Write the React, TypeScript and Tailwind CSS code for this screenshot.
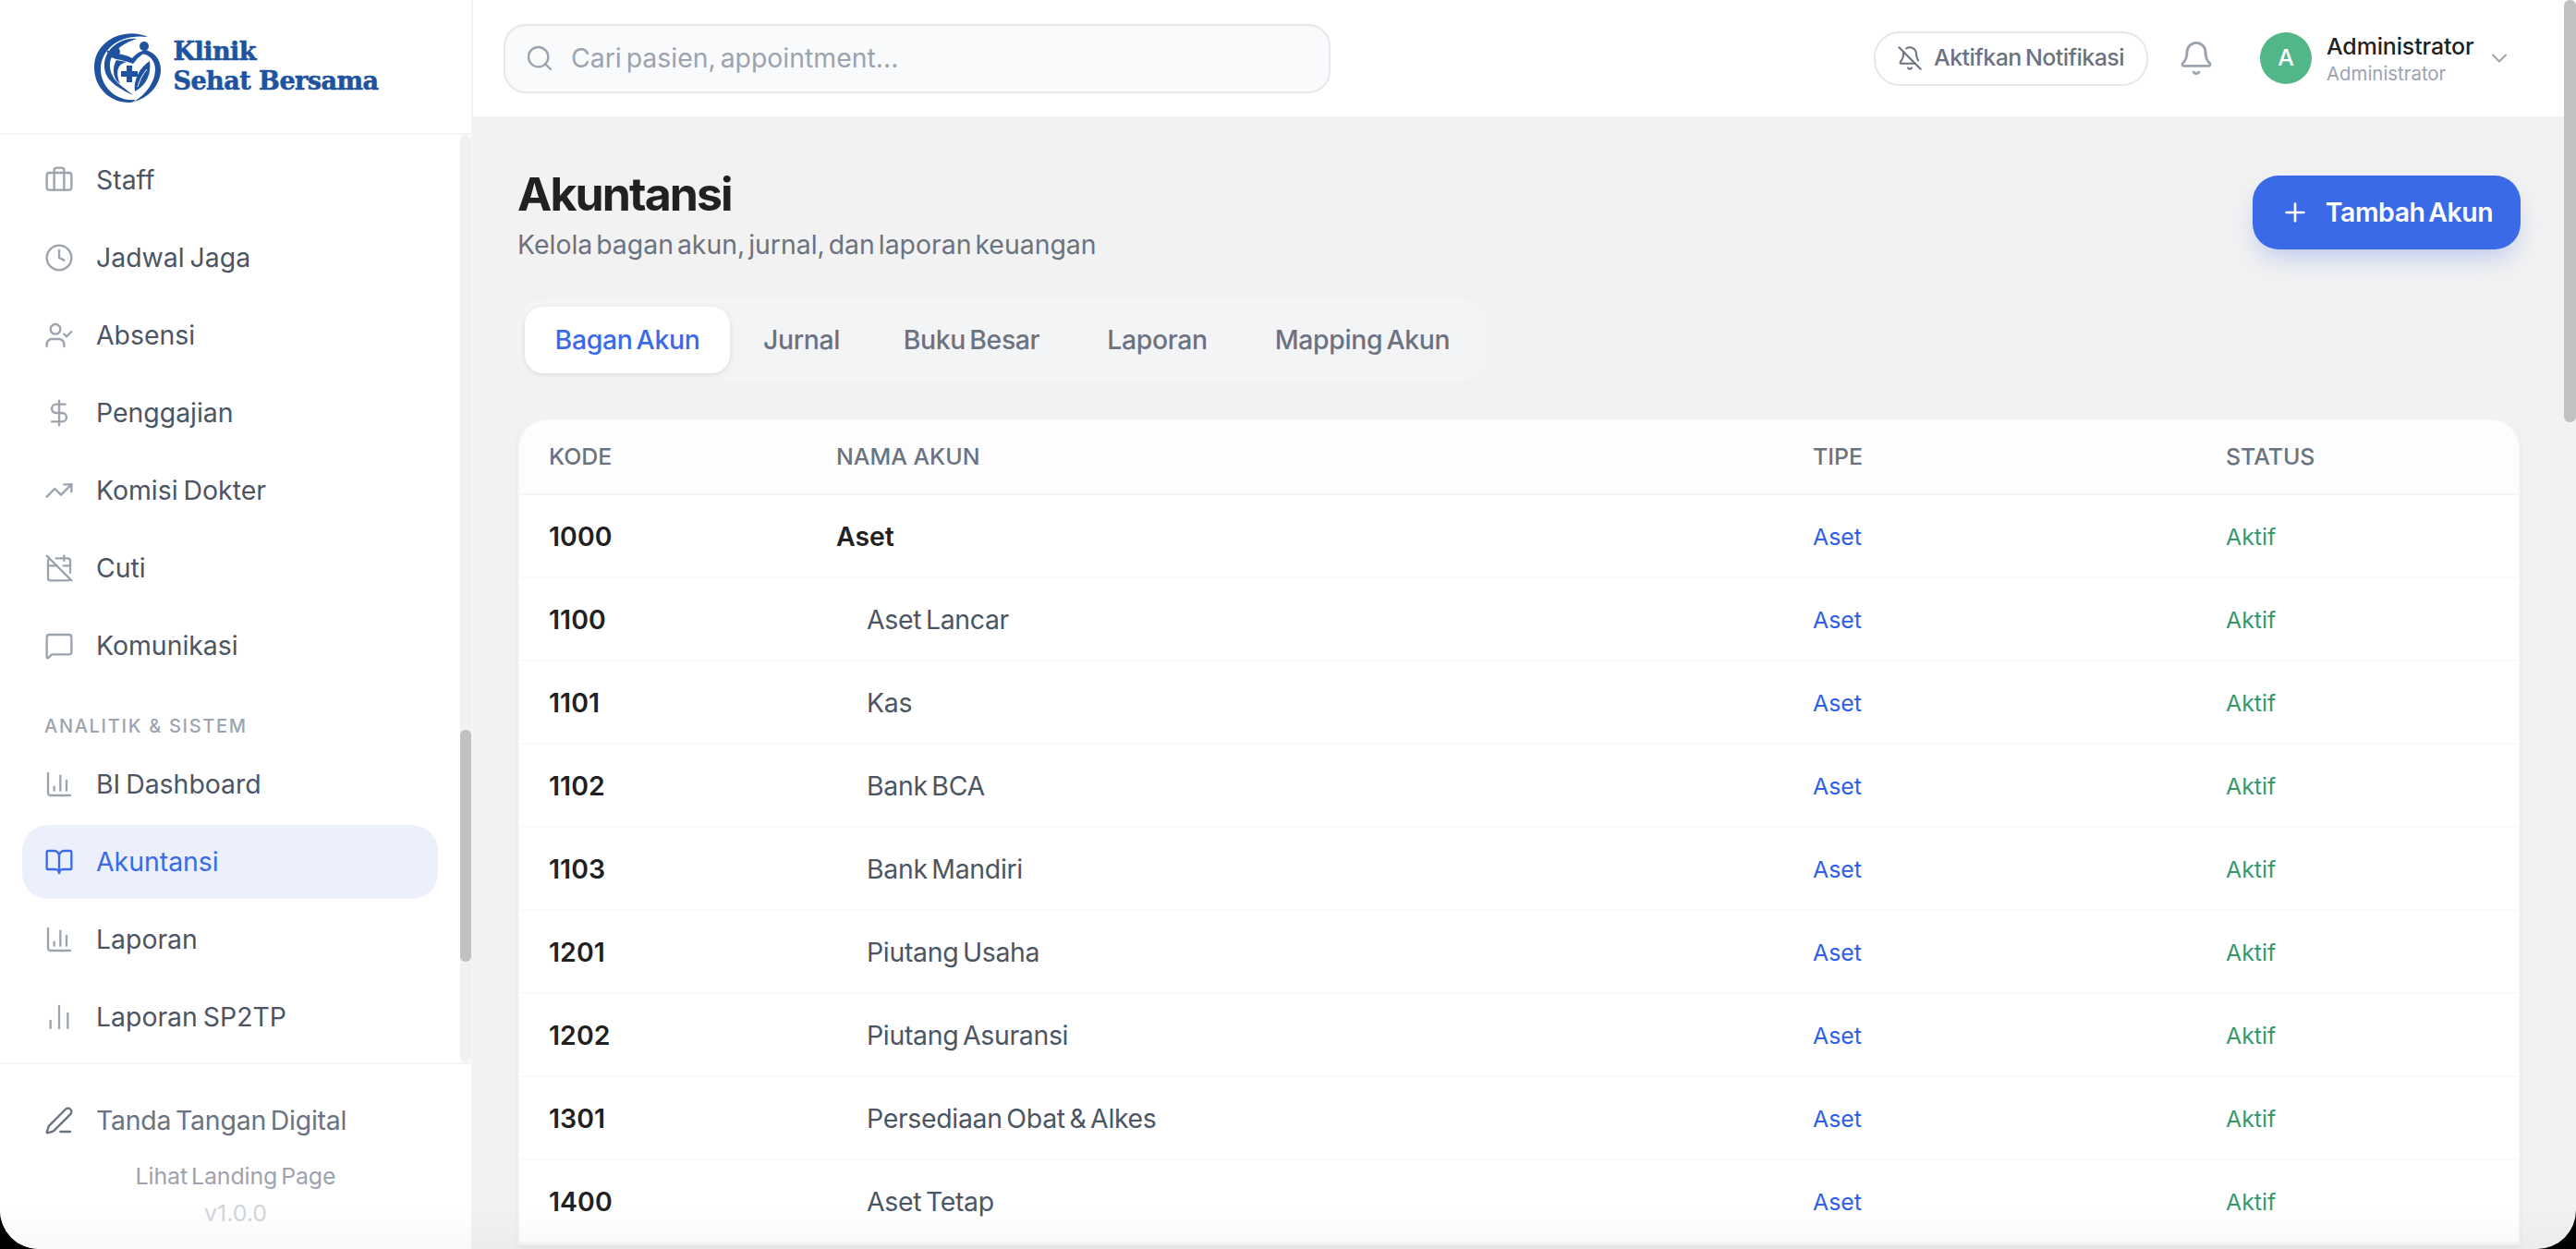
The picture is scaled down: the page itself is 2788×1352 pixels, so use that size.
import { BarChart2, BarChart3, Bell, BellOff, BookOpen, Briefcase, CalendarOff, ChevronDown, Clock, DollarSign, MessageSquare, PenLine, Plus, Search, TrendingUp, UserCheck } from "lucide-react";

const navA = [
  { label: "Staff", Icon: Briefcase },
  { label: "Jadwal Jaga", Icon: Clock },
  { label: "Absensi", Icon: UserCheck },
  { label: "Penggajian", Icon: DollarSign },
  { label: "Komisi Dokter", Icon: TrendingUp },
  { label: "Cuti", Icon: CalendarOff },
  { label: "Komunikasi", Icon: MessageSquare },
];
const navB = [
  { label: "BI Dashboard", Icon: BarChart3, active: false },
  { label: "Akuntansi", Icon: BookOpen, active: true },
  { label: "Laporan", Icon: BarChart3, active: false },
  { label: "Laporan SP2TP", Icon: BarChart2, active: false },
];
const rows = [
  ["1000", "Aset", 0],
  ["1100", "Aset Lancar", 1],
  ["1101", "Kas", 1],
  ["1102", "Bank BCA", 1],
  ["1103", "Bank Mandiri", 1],
  ["1201", "Piutang Usaha", 1],
  ["1202", "Piutang Asuransi", 1],
  ["1301", "Persediaan Obat & Alkes", 1],
  ["1400", "Aset Tetap", 1],
] as const;
const tabs = [
  { label: "Jurnal", cls: "flex h-[72px] w-[139px] items-center justify-center font-medium whitespace-nowrap" },
  { label: "Buku Besar", cls: "flex h-[72px] w-[213px] items-center justify-center font-medium whitespace-nowrap" },
  { label: "Laporan", cls: "flex h-[72px] w-[173px] items-center justify-center font-medium whitespace-nowrap" },
  { label: "Mapping Akun", cls: "flex h-[72px] w-[255px] items-center justify-center font-medium whitespace-nowrap" },
];

function Logo() {
  return (
    <svg viewBox="0 0 86 84" className="w-[86px] h-[84px] shrink-0" fill="#1f539f">
      <path d="M66 11C42 0 8 14 8 44c0 22 17 38 38 38 3 0 6-1 6-3-21 2-37-15-37-33C15 24 36 7 66 11z" />
      <path d="M62 25c10 1 18 10 18 21 0 17-13 31-29 35 13-8 23-21 23-35 0-9-6-16-15-17z" />
      <path d="M54 13C37 11 19 24 19 42c0 15 12 23 31 32-10-9-24-15-25-31-1-13 12-25 29-30z" />
      <circle cx="31" cy="27" r="5" />
      <circle cx="62" cy="21" r="5" />
      <path d="M21 25c2 6 6 9 11 10 5 1 11 2 15 4 2 1 3 1 4 0 4-5 8-10 16-12l-3-2c-6 1-11 4-15 9-5-3-11-4-16-5-4-1-8-2-12-4z" />
      <path d="M32 36c-3 5-5 14 0 22l4 4c-3-7-4-14-1-19 2-3 5-4 8-5-4-1-8-1-11-2z" />
      <path d="M43 42h6v6h6v6h-6v6h-6v-6h-6v-6h6z" />
      <path d="M68 37c2 13-3 26-16 33-2-12 5-26 16-33z" />
      <path d="M55 65c2-7 5-13 10-19" fill="none" stroke="#fff" strokeWidth="1" />
    </svg>
  );
}

function App() {
  return (
    <div className="relative w-full h-[1352px] overflow-hidden bg-black font-['Inter',sans-serif]">
      <div className="relative flex h-full overflow-hidden rounded-b-[42px] bg-[#f2f2f2]">
        <aside className="flex w-[512px] shrink-0 flex-col border-r-2 border-[#f3f4f6] bg-white">
          <div className="flex h-[146px] shrink-0 items-center justify-center gap-[7px] border-b-2 border-[#f3f4f6] pr-[6px] pb-[2px]">
            <Logo />
            <div className="mt-[2px] font-['DejaVu_Serif',serif] text-[27px] leading-[32px] font-bold tracking-[-0.5px] text-[#1f539f] [-webkit-text-stroke:0.6px_#1f539f]">
              <div>Klinik</div>
              <div className="whitespace-nowrap">Sehat Bersama</div>
            </div>
          </div>
          <nav className="relative flex h-[1004px] shrink-0 flex-col gap-[4px] overflow-hidden pt-[9px] pl-[24px] pr-[36px]">
            {navA.map(({ label, Icon }) => (
              <a key={label} className="flex h-[80px] shrink-0 items-center gap-[24px] rounded-[28px] px-[24px] text-[28.4px] text-[#4b5563] [word-spacing:-2px]">
                <Icon size={32} strokeWidth={1.75} className="shrink-0 text-[#9ca3af]" />
                <span className="whitespace-nowrap">{label}</span>
              </a>
            ))}
            <div className="mt-[26px] mb-[2px] h-[34px] shrink-0 px-[24px] text-[20px] leading-[34px] font-medium tracking-[1.7px] text-[#9ca3af] uppercase">Analitik &amp; Sistem</div>
            {navB.map(({ label, Icon, active }) => (
              <a key={label} className={active ? "flex h-[80px] shrink-0 items-center gap-[24px] rounded-[28px] bg-[#ebf0fc] px-[24px] text-[28.4px] text-[#3b6ae8] [word-spacing:-2px]" : "flex h-[80px] shrink-0 items-center gap-[24px] rounded-[28px] px-[24px] text-[28.4px] text-[#4b5563] [word-spacing:-2px]"}>
                <Icon size={32} strokeWidth={1.75} className={active ? "shrink-0 text-[#3b6ae8]" : "shrink-0 text-[#9ca3af]"} />
                <span className="whitespace-nowrap">{label}</span>
              </a>
            ))}
            <div className="absolute top-0 right-0 h-full w-[12px] rounded-[6px] bg-[#f1f1f1]">
              <div className="absolute top-[644px] h-[251px] w-[12px] rounded-[6px] bg-[#c1c1c1]" />
            </div>
          </nav>
          <div className="flex flex-1 flex-col border-t-2 border-[#f3f4f6] pl-[24px] pr-[36px] pt-[21px]">
            <a className="flex h-[80px] items-center gap-[24px] px-[24px] text-[28.4px] tracking-[-0.2px] text-[#6b7280] [word-spacing:-3px]">
              <PenLine size={32} strokeWidth={1.75} className="shrink-0" />
              <span className="whitespace-nowrap">Tanda Tangan Digital</span>
            </a>
            <div className="w-[462px] text-center">
              <div className="h-[40px] text-[24.9px] leading-[40px] tracking-[-0.1px] text-[#9ca3af] [word-spacing:-3px]">Lihat Landing Page</div>
              <div className="h-[40px] text-[24.9px] leading-[40px] text-[#d1d5db]">v1.0.0</div>
            </div>
          </div>
        </aside>

        <div className="flex min-w-0 flex-1 flex-col">
          <header className="flex h-[126px] shrink-0 items-center bg-white pr-[13px] pl-[33px]">
            <div className="flex h-[75px] w-[895px] items-center gap-[18px] rounded-[24px] border-2 border-[#e5e7eb] bg-[#f9fafb] px-[21px]">
              <Search size={32} strokeWidth={1.75} className="shrink-0 text-[#9ca3af]" />
              <span className="text-[28.4px] text-[#9ca3af] [word-spacing:-3px]">Cari pasien, appointment...</span>
            </div>
            <div className="ml-[588px] flex h-[59px] w-[297px] items-center gap-[12px] rounded-[28px] border-2 border-[#e5e7eb] bg-white pl-[23px] text-[24.9px] font-medium tracking-[-0.5px] text-[#6b7280] [word-spacing:-2px]">
              <BellOff size={28} strokeWidth={1.75} className="shrink-0" />
              <span className="whitespace-nowrap">Aktifkan Notifikasi</span>
            </div>
            <Bell size={40} strokeWidth={1.75} className="ml-[32px] shrink-0 text-[#9ca3af]" />
            <div className="ml-[49px] flex h-[56px] w-[56px] shrink-0 items-center justify-center rounded-full bg-[#52b788] text-[24.9px] font-medium text-white">A</div>
            <div className="ml-[16px] w-[173px]">
              <div className="text-[24.9px] leading-[36px] font-medium tracking-[-0.1px] text-[#212121]">Administrator</div>
              <div className="-mt-[2px] text-[20.4px] leading-[28px] text-[#9ca3af]">Administrator</div>
            </div>
            <ChevronDown size={28} strokeWidth={1.75} className="shrink-0 text-[#9ca3af]" />
            <div className="flex-1" />
          </header>

          <main className="relative flex-1 overflow-hidden pt-[52px] pl-[48px] pr-[60px]">
            <div className="flex items-start justify-between">
              <div>
                <h1 className="text-[50px] leading-[64px] font-bold tracking-[-1.9px] text-[#212121]">Akuntansi</h1>
                <p className="mt-[3px] text-[28.4px] leading-[40px] text-[#6b7280] [word-spacing:-4px]">Kelola bagan akun, jurnal, dan laporan keuangan</p>
              </div>
              <button className="mt-[12px] flex h-[80px] w-[290px] items-center justify-center gap-[17px] rounded-[28px] bg-[#3b6ae8] text-[28.4px] font-semibold tracking-[-0.4px] text-white shadow-[0_14px_28px_-6px_rgba(59,106,232,0.3)] [word-spacing:-3px]">
                <Plus size={32} strokeWidth={2} />
                Tambah Akun
              </button>
            </div>

            <div className="mt-[39px] flex h-[88px] w-[1050px] items-center gap-[8px] rounded-[28px] bg-[#f3f4f6] pl-[8px] text-[28.4px] tracking-[-0.35px] text-[#6b7280] [word-spacing:-3px]">
              <div className="flex h-[72px] w-[222px] items-center justify-center rounded-[20px] bg-white font-medium text-[#3b6ae8] shadow-[0_2px_6px_rgba(0,0,0,0.1)]">Bagan Akun</div>
              {tabs.map((t) => (
                <div key={t.label} className={t.cls}>{t.label}</div>
              ))}
            </div>

            <div className="mt-[41px] overflow-hidden rounded-t-[32px] border-2 border-[#f3f4f6] bg-white shadow-[0_2px_6px_rgba(0,0,0,0.05)]">
              <div className="grid h-[81px] grid-cols-[310px_1057px_447px_1fr] items-center border-b-2 border-[#f3f4f6] bg-[#fcfdfc] text-[24.9px] font-medium text-[#6b7280] uppercase">
                <div className="pl-[32px]">Kode</div>
                <div className="pl-[33px]">Nama Akun</div>
                <div className="pl-[33px]">Tipe</div>
                <div className="pl-[33px]">Status</div>
              </div>
              {rows.map(([kode, nama, lvl]) => (
                <div key={kode} className="grid h-[90px] grid-cols-[310px_1057px_447px_1fr] items-center border-b-2 border-[#f9fafb] pt-[2px]">
                  <div className="pl-[32px] text-[28.4px] font-semibold tracking-[0.1px] text-[#212121]">{kode}</div>
                  <div className={lvl === 0 ? "pl-[33px] text-[28.4px] font-semibold text-[#212121]" : "pl-[66px] text-[28.4px] tracking-[-0.3px] text-[#4b5563] [word-spacing:-3px]"}>{nama}</div>
                  <div className="pl-[33px] pt-[2px] text-[24.9px] text-[#2f5fe8]">Aset</div>
                  <div className="pl-[33px] pt-[2px] text-[24.9px] text-[#38986c]">Aktif</div>
                </div>
              ))}
            </div>
          </main>
        </div>

        <div className="absolute top-0 right-0 bottom-0 w-[13px]">
          <div className="h-[457px] rounded-[6px] bg-[#c1c1c1]" />
        </div>
        <div className="pointer-events-none absolute right-0 bottom-0 left-0 h-[50px] bg-gradient-to-b from-transparent to-[#00000006]" />
      </div>
    </div>
  );
}

export default App;
